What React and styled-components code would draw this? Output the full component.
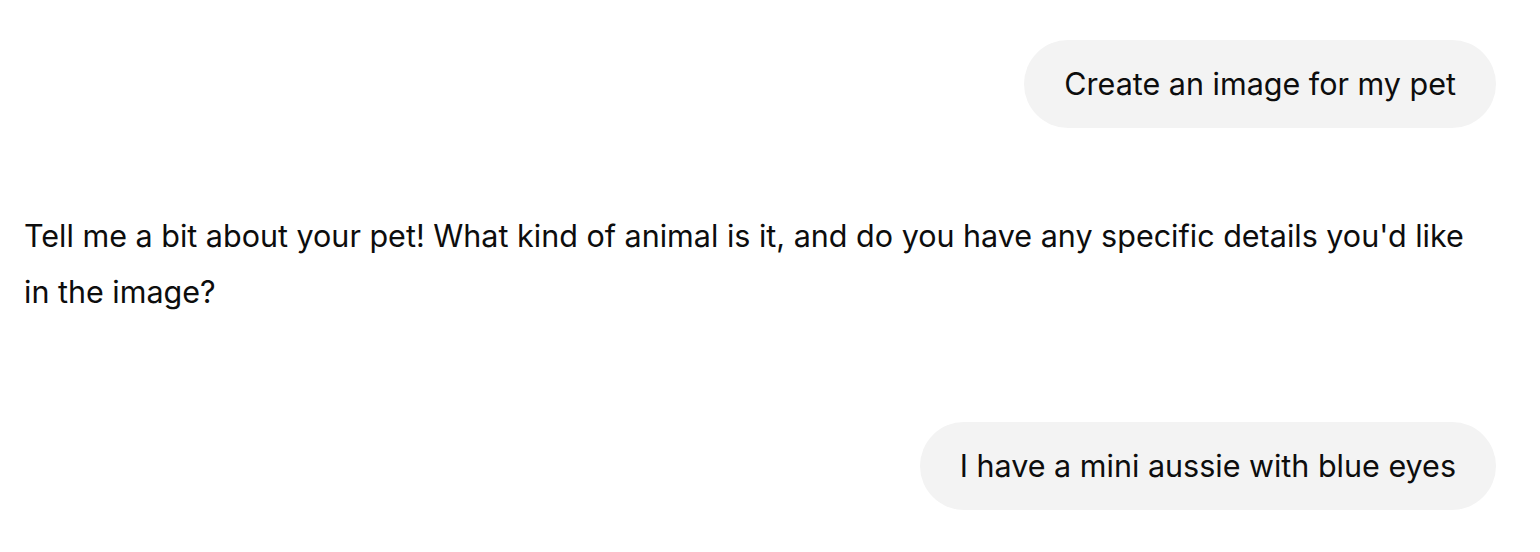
import React from 'react'
import styled, { createGlobalStyle } from 'styled-components'

const GlobalStyle = createGlobalStyle`
  html, body {
    margin: 0;
    padding: 0;
    background: #ffffff;
  }
  body {
    font-family: Inter, "Noto Sans", "Liberation Sans", sans-serif;
    color: #0d0d0d;
    -webkit-font-smoothing: antialiased;
  }
`

const Thread = styled.div`
  width: 1472px;
  padding: 40px 44px 0 24px;
  display: flex;
  flex-direction: column;
`

const UserRow = styled.div`
  display: flex;
  justify-content: flex-end;
  margin-bottom: ${p => p.$gap || 0}px;
`

const Bubble = styled.div`
  background: #f3f3f3;
  border-radius: 44px;
  padding: 20px 40px;
  font-size: 30.5px;
  line-height: 48px;
  white-space: nowrap;
`

const AssistantText = styled.p`
  margin: 0 0 102px;
  font-size: 30.5px;
  line-height: 56px;
`

export default function App() {
  return (
    <>
      <GlobalStyle />
      <Thread>
        <UserRow $gap={80}>
          <Bubble>Create an image for my pet</Bubble>
        </UserRow>
        <AssistantText>
          Tell me a bit about your pet! What kind of animal is it, and do you have any specific details you'd like in the image?
        </AssistantText>
        <UserRow>
          <Bubble>I have a mini aussie with blue eyes</Bubble>
        </UserRow>
      </Thread>
    </>
  )
}
